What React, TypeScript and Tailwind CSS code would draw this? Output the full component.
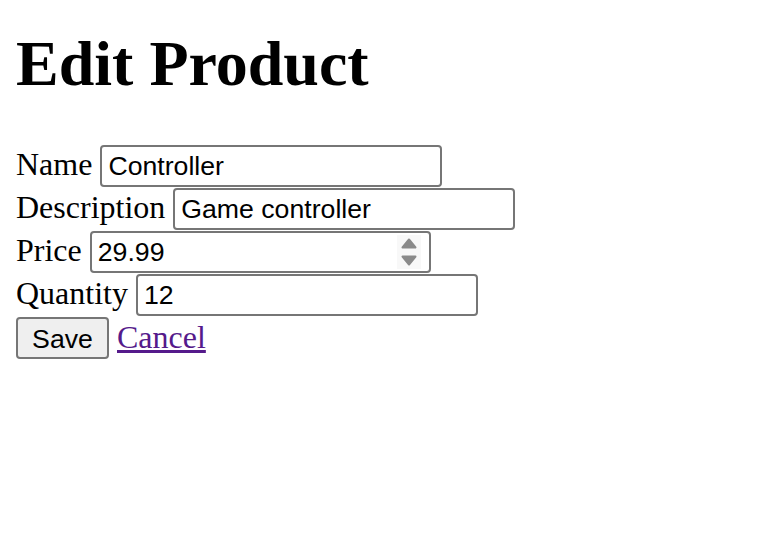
const FIELDS = [
  { label: "Name", value: "Controller" },
  { label: "Description", value: "Game controller" },
];

const INPUT =
  "h-[42px] rounded-[4px] border-2 border-[#767676] bg-white pl-[6px] pr-[4px] py-[2px] font-['Liberation_Sans',Arial,sans-serif] text-[26.67px] text-black outline-none";

function Spinner() {
  return (
    <div className="absolute right-[10px] top-[4px] flex h-[34px] w-[24px] flex-col items-center justify-center gap-[6px] bg-[#f8f8f8]">
      <svg width="16" height="11" viewBox="0 0 16 11">
        <path d="M8 1.5 L14.5 9.5 H1.5 Z" fill="#8a8a8a" stroke="#8a8a8a" strokeWidth="2" strokeLinejoin="round" />
      </svg>
      <svg width="16" height="11" viewBox="0 0 16 11">
        <path d="M1.5 1.5 H14.5 L8 9.5 Z" fill="#8a8a8a" stroke="#8a8a8a" strokeWidth="2" strokeLinejoin="round" />
      </svg>
    </div>
  );
}

export default function App() {
  return (
    <div className="min-h-[558px] bg-white px-4 pt-[28px] font-['Liberation_Serif','Times_New_Roman',serif] text-black">
      <h1 className="text-[64px] font-bold leading-[71px]">Edit Product</h1>

      <form className="mt-[46px]" onSubmit={(e) => e.preventDefault()}>
        {FIELDS.map((f) => (
          <div key={f.label} className="flex h-[43px] items-baseline gap-[8px]">
            <label className="text-[32px] leading-[37px]">{f.label}</label>
            <input className={`${INPUT} w-[342px]`} defaultValue={f.value} />
          </div>
        ))}
        <div className="flex h-[43px] items-baseline gap-[8px]">
          <label className="text-[32px] leading-[37px]">Price</label>
          <div className="relative">
            <input className={`${INPUT} w-[341px]`} defaultValue="29.99" />
            <Spinner />
          </div>
        </div>
        <div className="flex h-[43px] items-baseline gap-[8px]">
          <label className="text-[32px] leading-[37px]">Quantity</label>
          <input className={`${INPUT} w-[342px]`} defaultValue="12" />
        </div>
        <div className="flex h-[43px] items-baseline gap-[8px]">
          <button
            type="submit"
            className="h-[42px] w-[93px] rounded-[4px] border-2 border-[#767676] bg-[#efefef] font-['Liberation_Sans',Arial,sans-serif] text-[26.67px] text-black"
          >
            Save
          </button>
          <a href="#" className="text-[32px] leading-[37px] text-[#551a8b] underline">
            Cancel
          </a>
        </div>
      </form>
    </div>
  );
}
